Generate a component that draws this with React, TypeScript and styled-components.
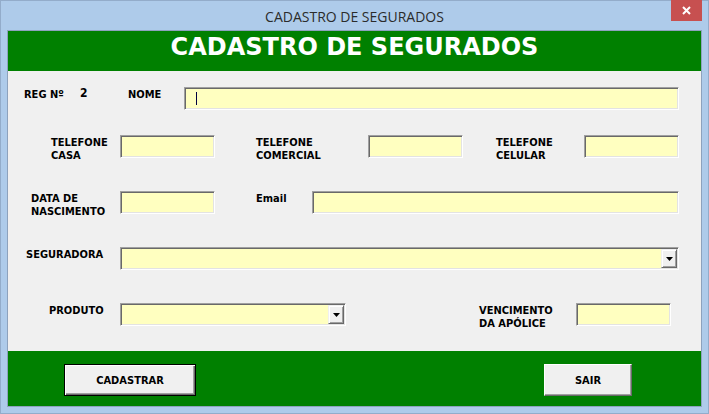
import React from "react";
import styled, { createGlobalStyle } from "styled-components";

const Global = createGlobalStyle`
  html, body { margin: 0; padding: 0; }
  body { width: 709px; height: 414px; overflow: hidden; background: #aecbea; }
  * { box-sizing: border-box; }
`;

const Frame = styled.div`
  width: 709px;
  height: 414px;
  background: #aecbea;
  border: 1px solid #93acca;
  display: flex;
  flex-direction: column;
  padding: 0 6px 6px 6px;
`;

const TitleBar = styled.div`
  height: 29px;
  display: grid;
  grid-template-columns: 1fr auto 1fr;
  align-items: start;
`;

const Title = styled.div`
  grid-column: 2;
  align-self: center;
  font-family: "Open Sans", "Noto Sans", sans-serif;
  font-size: 14px;
  color: #2b2b2b;
  padding-top: 1px;
`;

const CloseBtn = styled.div`
  grid-column: 3;
  justify-self: end;
  margin-top: -1px;
  width: 31px;
  height: 21px;
  background: #c75050;
  display: flex;
  align-items: center;
  justify-content: center;
`;

const Client = styled.div`
  flex: 1;
  border: 1px solid #8da2bd;
  display: flex;
  flex-direction: column;
  background: #f0f0f0;
  font-family: "DejaVu Sans Condensed", "DejaVu Sans", sans-serif;
`;

const Header = styled.div`
  height: 40px;
  background: #008000;
  color: #ffffff;
  text-align: center;
  font-family: "DejaVu Sans", sans-serif;
  font-weight: bold;
  font-size: 24px;
  line-height: 32px;
`;

const Body = styled.div`
  height: 280px;
  display: flex;
  flex-direction: column;
  padding-top: 16px;
`;

const Row = styled.div<{ $mt?: number; $pl: number }>`
  height: 23px;
  display: flex;
  align-items: flex-start;
  margin-top: ${(p) => p.$mt ?? 0}px;
  padding-left: ${(p) => p.$pl}px;
`;

const Label = styled.div<{ $w: number; $ml?: number }>`
  width: ${(p) => p.$w}px;
  margin-left: ${(p) => p.$ml ?? 0}px;
  flex: none;
  font-size: 11px;
  font-weight: bold;
  line-height: 13px;
  padding-top: 1px;
  color: #000;
  white-space: nowrap;
`;

const Value = styled(Label)`
  font-size: 12px;
  padding-top: 0px;
`;

const Field = styled.div<{ $w: number }>`
  width: ${(p) => p.$w}px;
  height: 23px;
  flex: none;
  background: #ffffc0;
  border-top: 1px solid #a0a0a0;
  border-left: 1px solid #a0a0a0;
  border-bottom: 1px solid #ffffff;
  border-right: 1px solid #ffffff;
  box-shadow: inset 1px 1px 0 #696969, inset -1px -1px 0 #e3e3e3;
  display: flex;
  align-items: center;
  justify-content: flex-end;
  padding: 1px;
`;

const Caret = styled.div`
  width: 1px;
  height: 13px;
  background: #000040;
  margin-right: auto;
  margin-left: 10px;
`;

const DropBtn = styled.div`
  width: 16px;
  height: 19px;
  background: #f0f0f0;
  border-top: 1px solid #f0f0f0;
  border-left: 1px solid #f0f0f0;
  border-right: 1px solid #696969;
  border-bottom: 1px solid #696969;
  box-shadow: inset 1px 1px 0 #ffffff, inset -1px -1px 0 #a0a0a0;
  display: flex;
  align-items: center;
  justify-content: center;
`;

const Footer = styled.div`
  flex: 1;
  background: #008000;
  display: flex;
  align-items: flex-start;
  justify-content: space-between;
  padding: 13px 69px 0 56px;
`;

const Button = styled.div<{ $w: number; $default?: boolean }>`
  width: ${(p) => p.$w}px;
  height: 32px;
  background: #f0f0f0;
  border: 1px solid ${(p) => (p.$default ? "#000000" : "#f0f0f0")};
  border-right-color: ${(p) => (p.$default ? "#000000" : "#696969")};
  border-bottom-color: ${(p) => (p.$default ? "#000000" : "#696969")};
  border-top-color: ${(p) => (p.$default ? "#000000" : "#ffffff")};
  border-left-color: ${(p) => (p.$default ? "#000000" : "#ffffff")};
  box-shadow: ${(p) =>
    p.$default
      ? "inset 1px 1px 0 #ffffff, inset -1px -1px 0 #696969, inset -2px -2px 0 #a0a0a0"
      : "inset -1px -1px 0 #a0a0a0"};
  display: flex;
  align-items: center;
  justify-content: center;
  font-size: 11px;
  font-weight: bold;
  color: #000;
`;

const Arrow = () => (
  <svg width="7" height="4" viewBox="0 0 7 4">
    <path d="M0 0H7L3.5 4Z" fill="#000" />
  </svg>
);

export default function App() {
  return (
    <>
      <Global />
      <Frame>
        <TitleBar>
          <Title>CADASTRO DE SEGURADOS</Title>
          <CloseBtn>
            <svg width="9" height="9" viewBox="0 0 9 9">
              <path d="M1 1L8 8M8 1L1 8" stroke="#fff" strokeWidth="2" />
            </svg>
          </CloseBtn>
        </TitleBar>
        <Client>
          <Header>CADASTRO DE SEGURADOS</Header>
          <Body>
            <Row $pl={16}>
              <Label $w={56}>REG Nº</Label>
              <Value $w={48}>2</Value>
              <Label $w={56}>NOME</Label>
              <Field $w={495}>
                <Caret />
              </Field>
            </Row>
            <Row $pl={43} $mt={25}>
              <Label $w={69}>
                TELEFONE
                <br />
                CASA
              </Label>
              <Field $w={95} />
              <Label $w={112} $ml={41}>
                TELEFONE
                <br />
                COMERCIAL
              </Label>
              <Field $w={95} />
              <Label $w={88} $ml={33}>
                TELEFONE
                <br />
                CELULAR
              </Label>
              <Field $w={95} />
            </Row>
            <Row $pl={23} $mt={33}>
              <Label $w={89}>
                DATA DE
                <br />
                NASCIMENTO
              </Label>
              <Field $w={95} />
              <Label $w={56} $ml={41}>
                Email
              </Label>
              <Field $w={367} />
            </Row>
            <Row $pl={18} $mt={33}>
              <Label $w={94}>SEGURADORA</Label>
              <Field $w={559}>
                <DropBtn>
                  <Arrow />
                </DropBtn>
              </Field>
            </Row>
            <Row $pl={41} $mt={33}>
              <Label $w={71}>PRODUTO</Label>
              <Field $w={226}>
                <DropBtn>
                  <Arrow />
                </DropBtn>
              </Field>
              <Label $w={97} $ml={133}>
                VENCIMENTO
                <br />
                DA APÓLICE
              </Label>
              <Field $w={95} />
            </Row>
          </Body>
          <Footer>
            <Button $w={132} $default>
              CADASTRAR
            </Button>
            <Button $w={88}>SAIR</Button>
          </Footer>
        </Client>
      </Frame>
    </>
  );
}
